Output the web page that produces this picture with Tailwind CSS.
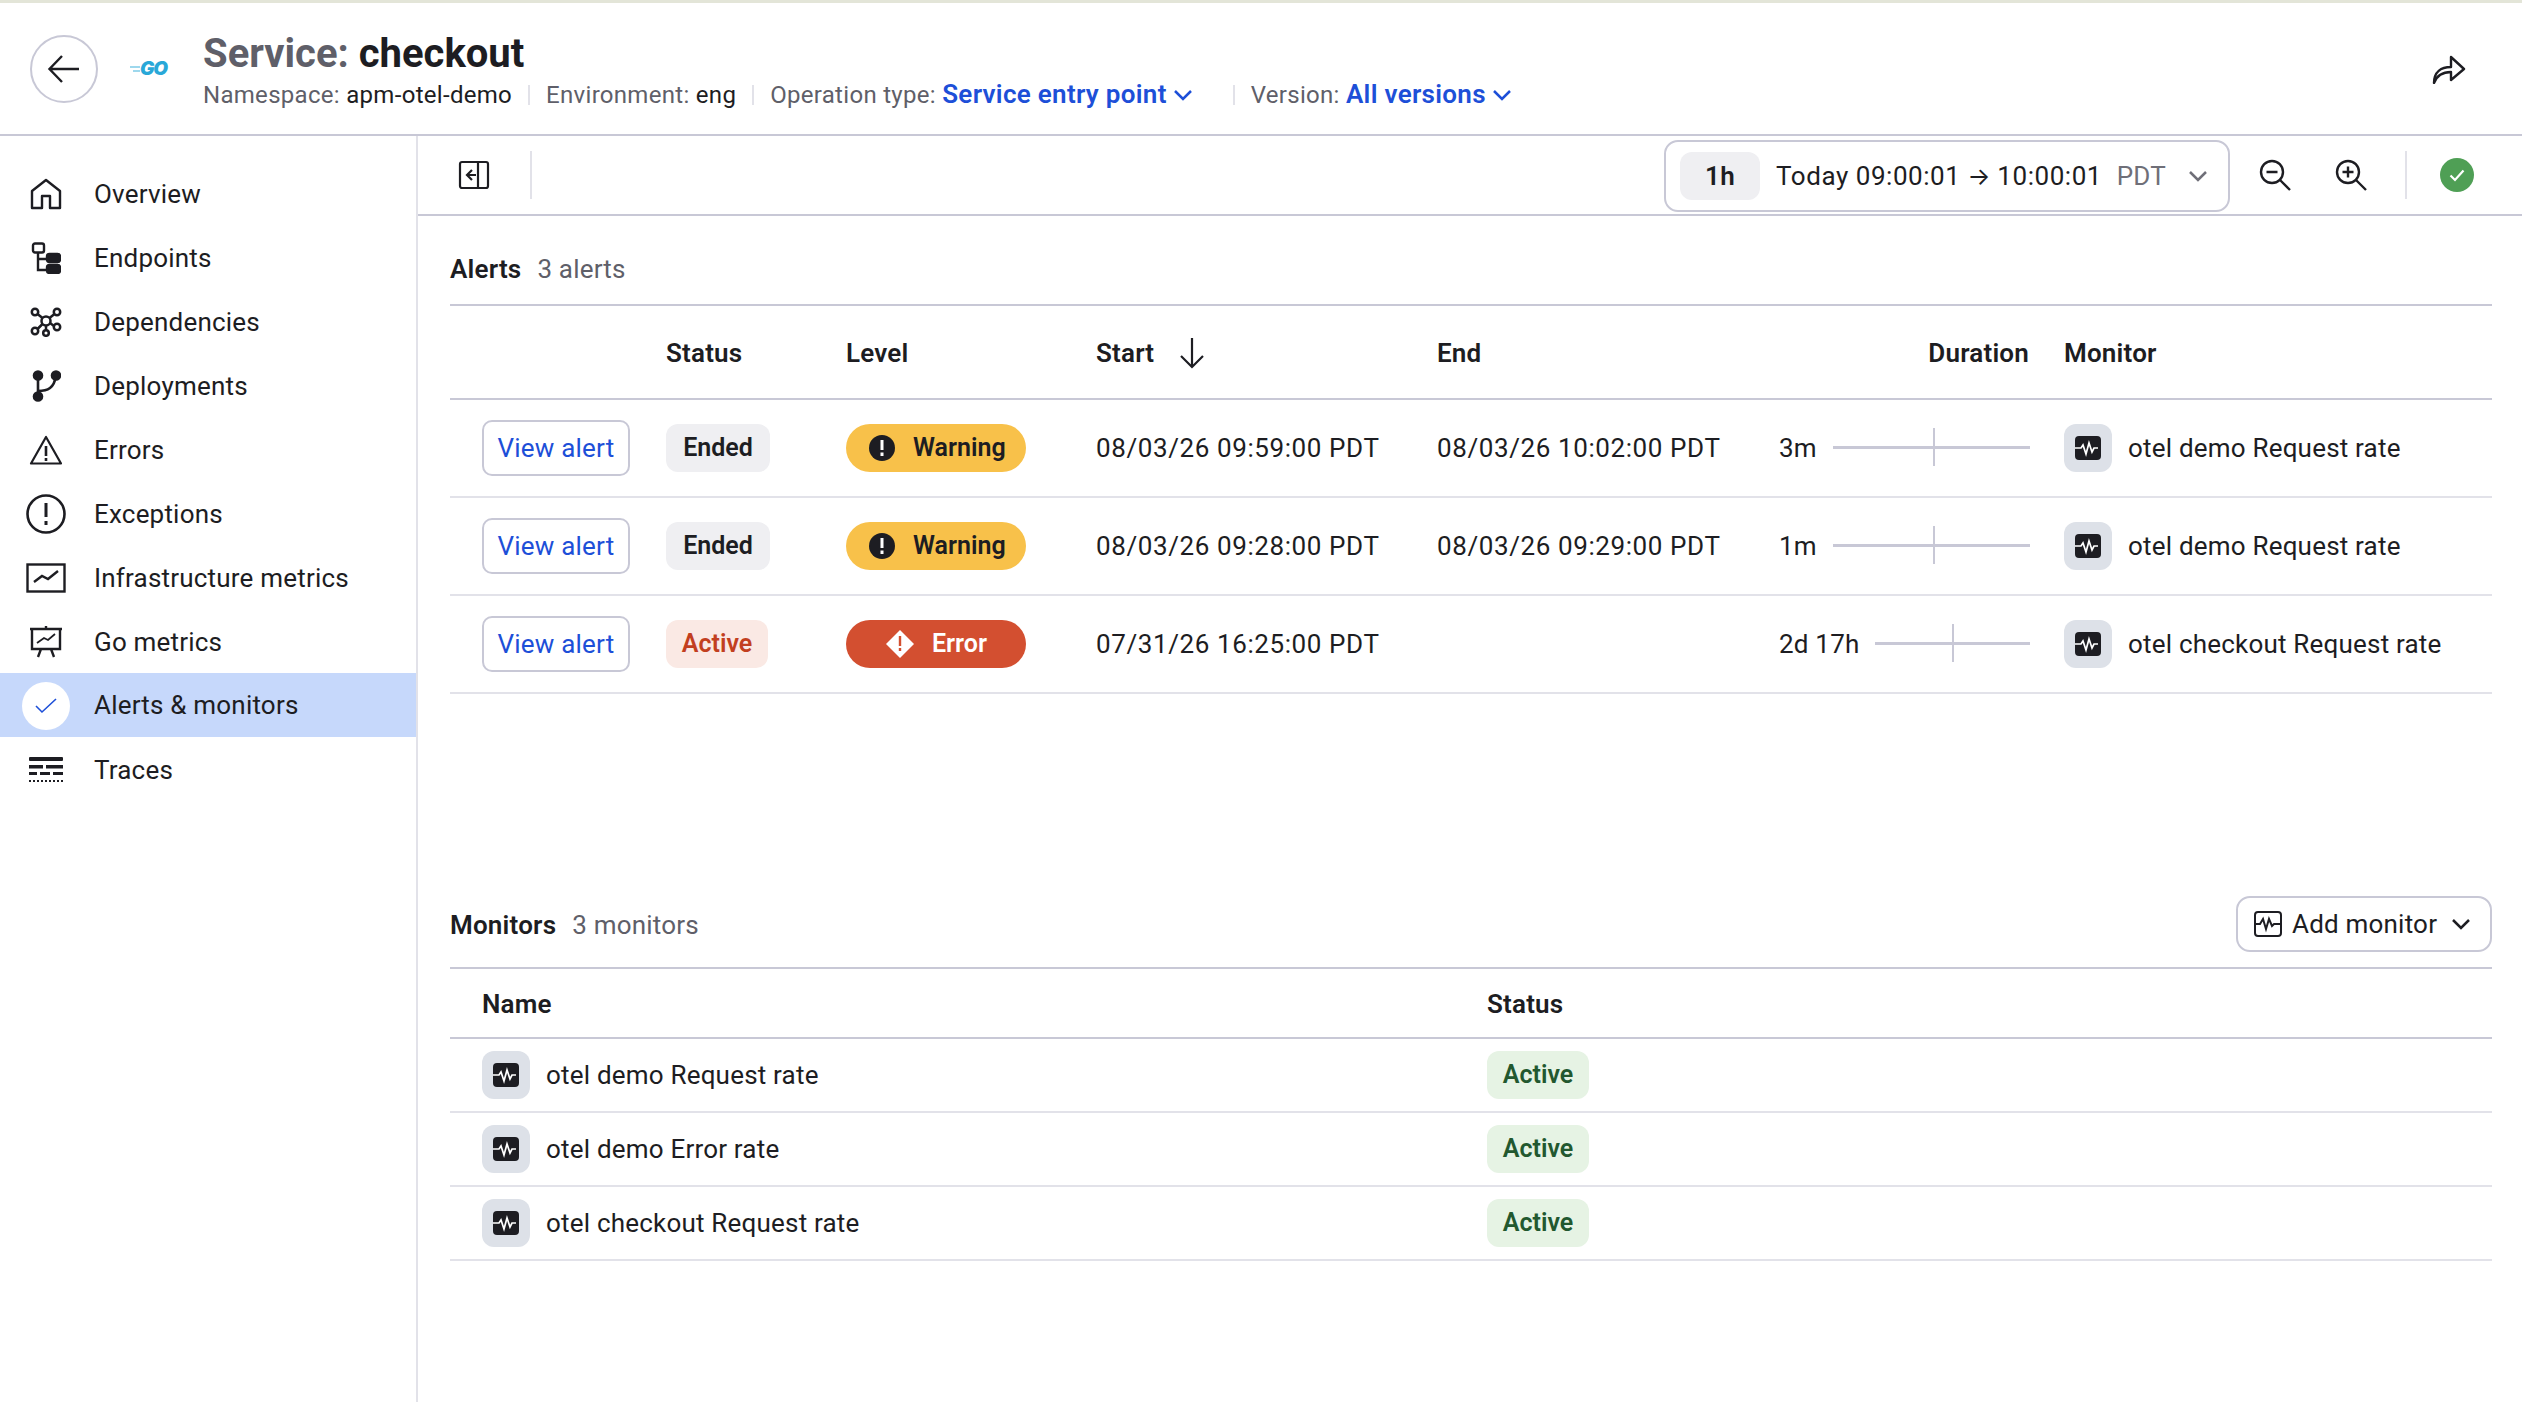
<!DOCTYPE html>
<html lang="en">
<head>
    <meta charset="UTF-8">
    <title>Service: checkout</title>
    <script src="https://cdn.jsdelivr.net/npm/@tailwindcss/browser@4"></script>
</head>
<body class="h-[1402px] w-[2522px] overflow-hidden bg-white font-['Roboto',sans-serif] text-[26px] tracking-[0.2px] text-[#1d1d22]">
    <svg class="hidden">
        <symbol id="pulse" viewBox="0 0 26 24">
            <rect width="26" height="24" rx="4" fill="#1d1d22"/>
            <path d="M0 12h6l2-3 3 9 3-11 3 9 2-4h4" fill="none" stroke="#fff" stroke-width="1.700"/>
        </symbol>
        <symbol id="chev" viewBox="0 0 20 12">
            <path d="M2 2l8 8 8-8" fill="none" stroke="currentColor" stroke-width="2.500"/>
        </symbol>
    </svg>

    <header class="h-[136px] border-t-[3px] border-b-2 border-t-[#e3e5d8] border-b-[#c8c8d6] flex items-center pl-[30px] pr-[56px]">
        <button class="w-[68px] h-[68px] rounded-full border-2 border-[#c8c8d6] flex items-center justify-center">
            <svg width="34" height="30" viewBox="0 0 34 30" fill="none" stroke="#1d1d22" stroke-width="2.400"><path d="M32 15H3M15 2L2.500 15 15 28"/></svg>
        </button>
        <div class="w-[105px] flex items-center pl-[32px] text-[#29a8d8]">
            <svg width="10" height="8" viewBox="0 0 10 8" fill="none" stroke="#7fcbe8" stroke-width="1.500"><path d="M0 2h10M3 6h7"/></svg>
            <span class="font-['Inter'] italic font-black text-[19px] leading-none tracking-[-1px]">GO</span>
        </div>
        <div class="flex-1 pt-[5px]">
            <h1 class="text-[40px] leading-[50px] font-bold text-[#5f5f69] tracking-normal">Service: <span class="text-[#1d1d22]">checkout</span></h1>
            <div class="-mt-[3px] flex items-center text-[24px] leading-[36px] tracking-[0.3px] text-[#5f5f69]">
                <span>Namespace: <span class="text-[#1d1d22]">apm-otel-demo</span></span>
                <span class="w-[2px] h-[20px] bg-[#e2e2e9] mx-[16px]"></span>
                <span>Environment: <span class="text-[#1d1d22]">eng</span></span>
                <span class="w-[2px] h-[20px] bg-[#e2e2e9] mx-[16px]"></span>
                <span>Operation type: <span class="text-[26px] font-semibold text-[#1d4fd8]">Service entry point</span></span>
                <svg class="w-[20px] h-[12px] ml-[6px] text-[#1d4fd8]"><use href="#chev"/></svg>
                <span class="w-[2px] h-[20px] bg-[#e2e2e9] ml-[40px] mr-[16px]"></span>
                <span>Version: <span class="text-[26px] font-semibold text-[#1d4fd8]">All versions</span></span>
                <svg class="w-[20px] h-[12px] ml-[6px] text-[#1d4fd8]"><use href="#chev"/></svg>
            </div>
        </div>
        <svg width="34" height="30" viewBox="0 0 34 30" fill="none" stroke="#1d1d22" stroke-width="2.400" stroke-linejoin="round"><path d="M2 29c0-11 7-16 17-16V3l13 12-13 11V18C11 18 5 21 2 29z"/></svg>
    </header>

    <div class="flex h-[1266px]">
        <nav class="w-[418px] shrink-0 border-r-2 border-[#e2e2e9] pt-[25px]">
            <a class="h-[64px] flex items-center pt-[2px]">
                <span class="w-[94px] flex justify-center pr-[2px]">
                    <svg width="32" height="32" viewBox="0 0 32 32" fill="none" stroke="#1d1d22" stroke-width="2.400" stroke-linejoin="round"><path d="M2 13L16 2l14 11v17H20V18h-8v12H2z"/></svg>
                </span>Overview</a>
            <a class="h-[64px] flex items-center pt-[2px]">
                <span class="w-[94px] flex justify-center pr-[2px]">
                    <svg width="30" height="32" viewBox="0 0 30 32" fill="none" stroke="#1d1d22" stroke-width="2.400"><rect x="2" y="1.500" width="11" height="9" rx="2"/><path d="M7 10v18h9M7 17h9"/><rect x="16" y="12" width="13" height="8" rx="2.500" fill="#1d1d22"/><rect x="16" y="23" width="13" height="8" rx="2.500" fill="#1d1d22"/></svg>
                </span>Endpoints</a>
            <a class="h-[64px] flex items-center pt-[2px]">
                <span class="w-[94px] flex justify-center pr-[2px]">
                    <svg width="32" height="30" viewBox="0 0 32 30" fill="none" stroke="#1d1d22" stroke-width="2.500"><circle cx="16" cy="14" r="4.500"/><circle cx="5" cy="5" r="3.200"/><circle cx="27" cy="5" r="3.200"/><circle cx="5" cy="24" r="3.200"/><circle cx="27" cy="20" r="3.200"/><circle cx="16" cy="26" r="2.800"/><path d="M7.500 7l5 4M24.500 7l-5 4M7.500 22l5-5M24 19l-4-3M16 18.500v5"/></svg>
                </span>Dependencies</a>
            <a class="h-[64px] flex items-center pt-[2px]">
                <span class="w-[94px] flex justify-center pr-[2px]">
                    <svg width="30" height="32" viewBox="0 0 30 32" fill="none" stroke="#1d1d22" stroke-width="2.600"><circle cx="7" cy="5.500" r="4" fill="#1d1d22"/><circle cx="25" cy="5.500" r="4" fill="#1d1d22"/><circle cx="7" cy="26.500" r="4" fill="#1d1d22"/><path d="M7 6v20M7 21c10 0 16-3 18-15"/></svg>
                </span>Deployments</a>
            <a class="h-[64px] flex items-center pt-[2px]">
                <span class="w-[94px] flex justify-center pr-[2px]">
                    <svg width="34" height="30" viewBox="0 0 34 30" fill="none" stroke="#1d1d22" stroke-width="2.200" stroke-linejoin="round"><path d="M17 2L2 28.500h30z"/><path d="M17 11v10M17 23v3" stroke-width="2.600"/></svg>
                </span>Errors</a>
            <a class="h-[64px] flex items-center pt-[2px]">
                <span class="w-[94px] flex justify-center pr-[2px]">
                    <svg width="40" height="40" viewBox="0 0 40 40" fill="none" stroke="#1d1d22" stroke-width="2.600"><circle cx="20" cy="20" r="18.500"/><path d="M20 9v14M20 27v4" stroke-width="3"/></svg>
                </span>Exceptions</a>
            <a class="h-[64px] flex items-center pt-[2px]">
                <span class="w-[94px] flex justify-center pr-[2px]">
                    <svg width="40" height="30" viewBox="0 0 40 30" fill="none" stroke="#1d1d22" stroke-width="2.400"><rect x="1.500" y="1.500" width="37" height="27"/><path d="M8 19l8-6 6 3 10-8"/></svg>
                </span>Infrastructure metrics</a>
            <a class="h-[64px] flex items-center pt-[2px]">
                <span class="w-[94px] flex justify-center pr-[2px]">
                    <svg width="34" height="34" viewBox="0 0 34 34" fill="none" stroke="#1d1d22" stroke-width="2.400"><path d="M1 4h32M3 4v20h28V4M17 1v3M12 24l-3 8M22 24l3 8"/><path d="M8 18l7-5 4 2 7-6" stroke-width="1.800"/></svg>
                </span>Go metrics</a>
            <a class="h-[64px] flex items-center pt-[1px] bg-[#c6d8fb]">
                <span class="w-[94px] flex justify-center pr-[2px]">
                    <span class="w-[48px] h-[48px] rounded-full bg-white flex items-center justify-center">
                        <svg width="22" height="16" viewBox="0 0 22 16" fill="none" stroke="#1d4fd8" stroke-width="1.600"><path d="M1 8l6 6L21 1"/></svg>
                    </span>
                </span>Alerts &amp; monitors</a>
            <a class="h-[64px] flex items-center pt-[2px]">
                <span class="w-[94px] flex justify-center pr-[2px]">
                    <svg width="34" height="26" viewBox="0 0 34 26" fill="#1d1d22"><rect width="34" height="4" rx="1"/><rect y="8" width="14" height="3.500"/><rect x="17" y="8" width="17" height="3.500"/><rect y="15" width="8" height="3"/><rect x="11" y="15" width="10" height="3"/><rect x="24" y="15" width="10" height="3"/><path d="M0 24h34" stroke="#1d1d22" stroke-width="2" stroke-dasharray="2 2"/></svg>
                </span>Traces</a>
        </nav>

        <main class="flex-1 min-w-0">
            <div class="h-[80px] border-b-2 border-[#c8c8d6] flex items-center pl-[40px] pr-[48px]">
                <svg width="32" height="30" viewBox="0 0 32 30" fill="none" stroke="#1d1d22" stroke-width="2.200"><rect x="2" y="2" width="28" height="26" rx="2"/><path d="M20 2v26M14 10l-5 5 5 5M9 15h9"/></svg>
                <span class="w-[2px] h-[48px] bg-[#e2e2e9] ml-[40px] mr-auto"></span>
                <div class="w-[566px] h-[72px] -mb-[2px] rounded-[14px] border-2 border-[#c8c8d6] flex items-center pl-[14px] pr-[20px]">
                    <span class="w-[80px] h-[48px] rounded-[12px] bg-[#efeff2] flex items-center justify-center font-semibold">1h</span>
                    <span class="ml-[16px] tracking-[0.55px]">Today 09:00:01 <span class="font-['Inter'] text-[24px] tracking-normal">→</span> 10:00:01</span>
                    <span class="ml-auto text-[#6f6f78]">PDT</span>
                    <svg class="w-[20px] h-[12px] ml-[22px] text-[#6f6f78]"><use href="#chev"/></svg>
                </div>
                <svg class="ml-[28px]" width="34" height="34" viewBox="0 0 34 34" fill="none" stroke="#1d1d22" stroke-width="2.400"><circle cx="14" cy="14" r="11"/><path d="M22 22l10 10M8.500 14h11"/></svg>
                <svg class="ml-[42px]" width="34" height="34" viewBox="0 0 34 34" fill="none" stroke="#1d1d22" stroke-width="2.400"><circle cx="14" cy="14" r="11"/><path d="M22 22l10 10M8.500 14h11M14 8.500v11"/></svg>
                <span class="w-[2px] h-[48px] bg-[#e2e2e9] ml-[37px]"></span>
                <span class="ml-[33px] w-[34px] h-[34px] rounded-full bg-[#4f9f55] flex items-center justify-center">
                    <svg width="16" height="13" viewBox="0 0 16 13" fill="none" stroke="#fff" stroke-width="2.200"><path d="M1.500 6.500l4.500 4.500L14.500 1.500"/></svg>
                </span>
            </div>

            <div class="pl-[32px] pr-[30px]">
                <section class="h-[693px]">
                    <div class="h-[90px] pt-[18px] border-b-2 border-[#c8c8d6] flex items-center gap-[16px]">
                        <span class="font-semibold">Alerts</span><span class="text-[#5f5f69]">3 alerts</span>
                    </div>
                    <div class="grid grid-cols-[216px_180px_250px_341px_340px_287px_1fr] h-[94px] pt-[2px] items-center border-b-2 border-[#c8c8d6] font-semibold">
                        <span></span><span>Status</span><span>Level</span>
                        <span class="flex items-center gap-[25px]">Start
                            <svg width="26" height="32" viewBox="0 0 26 32" fill="none" stroke="#1d1d22" stroke-width="2.200"><path d="M13 1v29M2 19l11 11 11-11"/></svg>
                        </span>
                        <span>End</span><span class="text-right pr-[35px]">Duration</span><span>Monitor</span>
                    </div>

                    <div class="grid grid-cols-[216px_180px_250px_341px_340px_287px_1fr] h-[98px] items-center border-b-2 border-[#e2e2e9]">
                        <button class="ml-[32px] w-[148px] h-[56px] rounded-[10px] border-2 border-[#c8c8d6] text-[#1d4fd8]">View alert</button>
                        <span class="w-[104px] h-[48px] rounded-[12px] bg-[#efeff2] text-[25px] tracking-normal font-semibold flex items-center justify-center">Ended</span>
                        <span class="w-[180px] h-[48px] rounded-full bg-[#f8c14a] text-[25px] tracking-normal font-semibold flex items-center pl-[23px]">
                            <span class="w-[26px] h-[26px] rounded-full bg-[#1d1d22] text-white flex items-center justify-center mr-[18px]"><svg width="4" height="16" viewBox="0 0 4 16" fill="#fff"><path d="M.5 0h3v10h-3zM.5 12.500h3V16h-3z"/></svg></span>Warning</span>
                        <span class="tracking-[0.6px]">08/03/26 09:59:00 PDT</span>
                        <span class="tracking-[0.6px]">08/03/26 10:02:00 PDT</span>
                        <span class="flex items-center pl-[2px] pr-[34px]">3m
                            <span class="relative flex-1 ml-[16px] h-[3px] bg-[#c8c8d6] -mt-[2px]"><span class="absolute left-[100px] -top-[18px] w-[2px] h-[38px] bg-[#c8c8d6]"></span></span>
                        </span>
                        <span class="flex items-center gap-[16px]">
                            <span class="w-[48px] h-[48px] rounded-[12px] bg-[#dde1e8] flex items-center justify-center"><svg class="w-[26px] h-[24px]"><use href="#pulse"/></svg></span>otel demo Request rate</span>
                    </div>

                    <div class="grid grid-cols-[216px_180px_250px_341px_340px_287px_1fr] h-[98px] items-center border-b-2 border-[#e2e2e9]">
                        <button class="ml-[32px] w-[148px] h-[56px] rounded-[10px] border-2 border-[#c8c8d6] text-[#1d4fd8]">View alert</button>
                        <span class="w-[104px] h-[48px] rounded-[12px] bg-[#efeff2] text-[25px] tracking-normal font-semibold flex items-center justify-center">Ended</span>
                        <span class="w-[180px] h-[48px] rounded-full bg-[#f8c14a] text-[25px] tracking-normal font-semibold flex items-center pl-[23px]">
                            <span class="w-[26px] h-[26px] rounded-full bg-[#1d1d22] text-white flex items-center justify-center mr-[18px]"><svg width="4" height="16" viewBox="0 0 4 16" fill="#fff"><path d="M.5 0h3v10h-3zM.5 12.500h3V16h-3z"/></svg></span>Warning</span>
                        <span class="tracking-[0.6px]">08/03/26 09:28:00 PDT</span>
                        <span class="tracking-[0.6px]">08/03/26 09:29:00 PDT</span>
                        <span class="flex items-center pl-[2px] pr-[34px]">1m
                            <span class="relative flex-1 ml-[16px] h-[3px] bg-[#c8c8d6] -mt-[2px]"><span class="absolute left-[100px] -top-[18px] w-[2px] h-[38px] bg-[#c8c8d6]"></span></span>
                        </span>
                        <span class="flex items-center gap-[16px]">
                            <span class="w-[48px] h-[48px] rounded-[12px] bg-[#dde1e8] flex items-center justify-center"><svg class="w-[26px] h-[24px]"><use href="#pulse"/></svg></span>otel demo Request rate</span>
                    </div>

                    <div class="grid grid-cols-[216px_180px_250px_341px_340px_287px_1fr] h-[98px] items-center border-b-2 border-[#e2e2e9]">
                        <button class="ml-[32px] w-[148px] h-[56px] rounded-[10px] border-2 border-[#c8c8d6] text-[#1d4fd8]">View alert</button>
                        <span class="w-[102px] h-[48px] rounded-[12px] bg-[#fae9e4] text-[#c23f1f] text-[25px] tracking-normal font-semibold flex items-center justify-center">Active</span>
                        <span class="w-[180px] h-[48px] rounded-full bg-[#d34f30] text-white text-[25px] tracking-normal font-semibold flex items-center pl-[40px]">
                            <svg class="mr-[18px]" width="28" height="28" viewBox="0 0 28 28"><path d="M14 0l14 14-14 14L0 14z" fill="#fff"/><path d="M12.800 6h2.400v10h-2.400zM12.800 18h2.400v3h-2.400z" fill="#d34f30"/></svg>Error</span>
                        <span class="tracking-[0.6px]">07/31/26 16:25:00 PDT</span>
                        <span></span>
                        <span class="flex items-center pl-[2px] pr-[34px]">2d 17h
                            <span class="relative flex-1 ml-[16px] h-[3px] bg-[#c8c8d6] -mt-[2px]"><span class="absolute left-[77px] -top-[18px] w-[2px] h-[38px] bg-[#c8c8d6]"></span></span>
                        </span>
                        <span class="flex items-center gap-[16px]">
                            <span class="w-[48px] h-[48px] rounded-[12px] bg-[#dde1e8] flex items-center justify-center"><svg class="w-[26px] h-[24px]"><use href="#pulse"/></svg></span>otel checkout Request rate</span>
                    </div>
                </section>

                <section>
                    <div class="h-[60px] border-b-2 border-[#c8c8d6] flex items-start gap-[16px]">
                        <span class="font-semibold h-[34px] leading-[34px] mt-[-1px]">Monitors</span><span class="text-[#5f5f69] h-[34px] leading-[34px] mt-[-1px]">3 monitors</span>
                        <button class="ml-auto -mt-[13px] w-[256px] h-[56px] rounded-[14px] border-2 border-[#c8c8d6] flex items-center pl-[16px]">
                            <svg width="28" height="26" viewBox="0 0 28 26" fill="none" stroke="#1d1d22" stroke-width="2"><rect x="1" y="1" width="26" height="24" rx="3"/><path d="M1 13h5l3-5 3 10 3-10 3 7 2-2h7"/></svg>
                            <span class="ml-[10px]">Add monitor</span>
                            <svg class="w-[20px] h-[12px] ml-[14px]"><use href="#chev"/></svg>
                        </button>
                    </div>
                    <div class="grid grid-cols-[1037px_1fr] h-[70px] pt-[2px] items-center border-b-2 border-[#c8c8d6] font-semibold">
                        <span class="pl-[32px]">Name</span><span>Status</span>
                    </div>
                    <div class="grid grid-cols-[1037px_1fr] h-[74px] items-center border-b-2 border-[#e2e2e9]">
                        <span class="pl-[32px] flex items-center gap-[16px]">
                            <span class="w-[48px] h-[48px] rounded-[12px] bg-[#dde1e8] flex items-center justify-center"><svg class="w-[26px] h-[24px]"><use href="#pulse"/></svg></span>otel demo Request rate</span>
                        <span class="w-[102px] h-[48px] rounded-[12px] bg-[#e6f3e4] text-[#22582f] text-[25px] tracking-normal font-semibold flex items-center justify-center">Active</span>
                    </div>
                    <div class="grid grid-cols-[1037px_1fr] h-[74px] items-center border-b-2 border-[#e2e2e9]">
                        <span class="pl-[32px] flex items-center gap-[16px]">
                            <span class="w-[48px] h-[48px] rounded-[12px] bg-[#dde1e8] flex items-center justify-center"><svg class="w-[26px] h-[24px]"><use href="#pulse"/></svg></span>otel demo Error rate</span>
                        <span class="w-[102px] h-[48px] rounded-[12px] bg-[#e6f3e4] text-[#22582f] text-[25px] tracking-normal font-semibold flex items-center justify-center">Active</span>
                    </div>
                    <div class="grid grid-cols-[1037px_1fr] h-[74px] items-center border-b-2 border-[#e2e2e9]">
                        <span class="pl-[32px] flex items-center gap-[16px]">
                            <span class="w-[48px] h-[48px] rounded-[12px] bg-[#dde1e8] flex items-center justify-center"><svg class="w-[26px] h-[24px]"><use href="#pulse"/></svg></span>otel checkout Request rate</span>
                        <span class="w-[102px] h-[48px] rounded-[12px] bg-[#e6f3e4] text-[#22582f] text-[25px] tracking-normal font-semibold flex items-center justify-center">Active</span>
                    </div>
                </section>
            </div>
        </main>
    </div>
</body>
</html>
